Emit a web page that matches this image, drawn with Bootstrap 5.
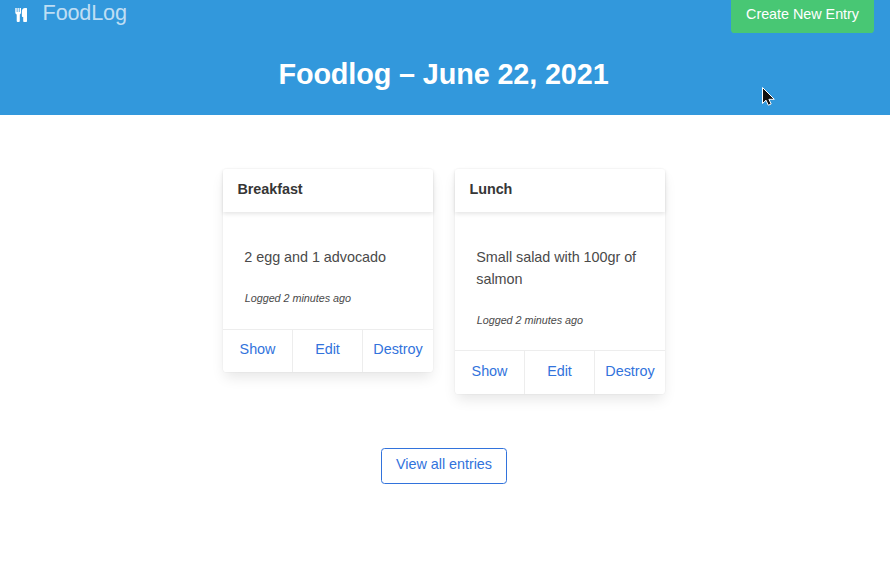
<!DOCTYPE html>
<html lang="en">
<head>
<meta charset="utf-8">
<meta name="viewport" content="width=device-width, initial-scale=1">
<title>FoodLog</title>
<link rel="stylesheet" href="https://cdn.jsdelivr.net/npm/bootstrap@5.3.0/dist/css/bootstrap.min.css">
<style>
  body { font: 14.4px/21.6px "Liberation Sans", Arial, sans-serif; letter-spacing: -.04px; color: #4a4a4a; min-height: 580px; overflow: hidden; }
  .hero { background: #3298dc; height: 115px; }
  .hero-bar { height: 33px; padding: 0 16px 0 14px; }
  .brand-icon { width: 14px; height: 14px; margin-top: 8px; }
  .brand-name { font-size: 21.6px; line-height: 26px; letter-spacing: -.15px; color: rgba(255,255,255,.7); margin-left: 14.6px; }
  .btn-create { background: #48c774; color: #fff; font-size: 14.4px; line-height: 21.6px; padding: 4px 15px 7.4px; border: 0; border-radius: 0 0 3.6px 3.6px; width: 143px; height: 33px; white-space: nowrap; }
  .hero-title { font-size: 28.8px; line-height: 32.4px; letter-spacing: -.12px; font-weight: 700; color: #fff; margin: 25px 3px 0 0; }
  .entries { padding: 54px 2px 0 0; gap: 22px; }
  .entry { width: 210px; border: 0; border-radius: 3.6px; color: #4a4a4a; box-shadow: 0 7px 14px -2px rgba(10,10,10,.1), 0 0 0 1px rgba(10,10,10,.02); }
  .entry-head { height: 43px; padding: 10px 14.4px; color: #363636; box-shadow: 0 2px 4px rgba(10,10,10,.1); }
  .entry-body { padding: 34px 21.3px 20px; }
  .entry-text { line-height: 22px; }
  .entry-time { font-size: 10.8px; line-height: 21px; margin: 20px 0 0 .5px; }
  .entry-foot { border-top: 1px solid #ededed; height: 43px; }
  .entry-foot a { width: 70px; padding-top: 9px; color: #3273dc; border-right: 1px solid #ededed; }
  .entry-foot a:last-child { border-right: 0; }
  .entry.tall .entry-body { padding-bottom: 19px; }
  .entry.tall .entry-foot { height: 44px; }
  .entry.tall .entry-foot a { padding-top: 10px; }
  .more { padding: 54px 2px 0 0; }
  .btn-all { color: #3273dc; border: 1px solid #3273dc; border-radius: 3.6px; width: 126px; height: 36px; font-size: 14.4px; line-height: 21.6px; padding: 5px 0 0; }
  .pointer { position: absolute; left: 761px; top: 86px; }
</style>
</head>
<body class="bg-white">
<header class="hero">
  <nav class="hero-bar d-flex align-items-start">
    <svg class="brand-icon" viewBox="0 0 14 14" fill="#fff"><path d="M1.300 0h1.400v4h.8V0h1.300v4h.8V0H7v4.500Q7 5.800 5.800 6.500V13q0 1-.9 1H3.700q-1 0-1-1V6.500Q1.300 5.800 1.300 4.500z"/><path d="M13 .4V13.200q0 .8-.8.800h-2.200q-.8 0-.8-.8V9H8.600q-.7 0-.7-.8V3.600Q7.900 .2 11 .1h1.600q.4 0 .4.300z"/></svg>
    <a class="brand-name text-decoration-none" href="#">FoodLog</a>
    <a class="btn btn-create ms-auto" href="#">Create New Entry</a>
  </nav>
  <h1 class="hero-title text-center">Foodlog – June 22, 2021</h1>
</header>
<main>
  <section class="entries d-flex justify-content-center align-items-start">
    <article class="card entry">
      <div class="entry-head fw-bold">Breakfast</div>
      <div class="entry-body"><div class="entry-text">2 egg and 1 advocado</div><div class="entry-time fst-italic">Logged 2 minutes ago</div></div>
      <div class="entry-foot d-flex text-center"><a class="text-decoration-none" href="#">Show</a><a class="text-decoration-none" href="#">Edit</a><a class="text-decoration-none" href="#">Destroy</a></div>
    </article>
    <article class="card entry tall">
      <div class="entry-head fw-bold">Lunch</div>
      <div class="entry-body"><div class="entry-text">Small salad with 100gr of salmon</div><div class="entry-time fst-italic">Logged 2 minutes ago</div></div>
      <div class="entry-foot d-flex text-center"><a class="text-decoration-none" href="#">Show</a><a class="text-decoration-none" href="#">Edit</a><a class="text-decoration-none" href="#">Destroy</a></div>
    </article>
  </section>
  <div class="more text-center"><a class="btn btn-all" href="#">View all entries</a></div>
</main>
<svg class="pointer" width="16" height="22" viewBox="0 0 16 22"><path d="M1.500 1.500v16l3.500-3.300 2.300 5 2.900-1.200-2.300-4.700H13.300z" fill="#111" stroke="#fff"/></svg>
</body>
</html>
